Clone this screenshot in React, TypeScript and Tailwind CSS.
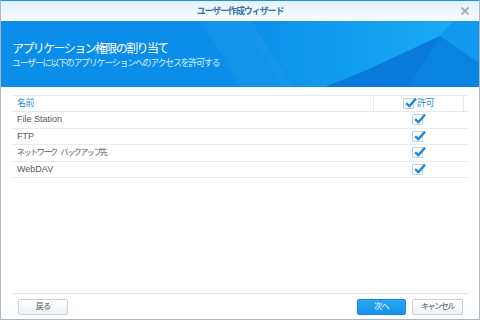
import React from "react";

const font = "[font-family:'Liberation_Sans','Noto_Sans_CJK_JP',sans-serif]";

const apps = [
  { name: "File Station", jp: false },
  { name: "FTP", jp: false },
  { name: "ネットワーク バックアップ先", jp: true },
  { name: "WebDAV", jp: false },
];

function Check() {
  return (
    <span className="relative inline-block w-[11px] h-[11px] border border-[#c5d0da] bg-white rounded-[1px]">
      <svg className="absolute left-[1px] top-[-2px]" width="12" height="12" viewBox="0 0 12 12">
        <path d="M1.2 6.2 L4.4 9.2 L11 1.6" fill="none" stroke="#168ae6" strokeWidth="2.4" strokeLinejoin="round" />
      </svg>
    </span>
  );
}

export default function App() {
  return (
    <div className={`w-[480px] h-[320px] flex flex-col bg-white border-x border-b border-[#a9b8c8] border-t border-t-[#1e8ee6] ${font}`}>
      {/* タイトルバー */}
      <div className="relative h-[20px] flex items-center justify-center bg-gradient-to-b from-[#e4f1fd] to-[#f9fcff]">
        <span className="text-[9px] font-bold tracking-[-1.1px] text-[#3a72ac] leading-none">ユーザー作成ウィザード</span>
        <svg className="absolute right-[10px] top-[6px]" width="8" height="8" viewBox="0 0 8 8">
          <path d="M0.5 0.5 L7.5 7.5 M7.5 0.5 L0.5 7.5" stroke="#9aa6b0" strokeWidth="1.6" />
        </svg>
      </div>

      {/* バナー */}
      <div className="relative h-[66px] bg-[#0a8eea] overflow-hidden">
        <svg className="absolute inset-0" width="478" height="66" viewBox="0 0 478 66">
          <defs>
            <linearGradient id="lb" x1="0" y1="0" x2="1" y2="0">
              <stop offset="0" stopColor="#20b4f6" stopOpacity="0" />
              <stop offset="1" stopColor="#20b4f6" stopOpacity="0.75" />
            </linearGradient>
          </defs>
          <polygon points="200,0 250,0 292,66 240,66" fill="#ffffff" opacity="0.04" />
          <polygon points="240,0 452,0 439,15 366,49 324,66 282,66" fill="url(#lb)" />
          <polygon points="324,66 366,49 439,15 408,66" fill="#0569cc" opacity="0.55" />
          <polygon points="439,15 478,42 478,66 408,66" fill="#0877d8" opacity="0.5" />
          <polygon points="452,0 478,0 478,42 439,15" fill="#18a6f2" opacity="0.45" />
        </svg>
        <div className="relative pl-[11px] pt-[21px] text-white">
          <div className="text-[12px] leading-[15px] tracking-[-1.6px]">アプリケーション権限の割り当て</div>
          <div className="text-[9px] leading-[12px] tracking-[-1.3px] text-[#d8eefc]">ユーザーに以下のアプリケーションへのアクセスを許可する</div>
        </div>
      </div>

      {/* テーブル */}
      <div className="flex-1 pl-[11px] pr-[10px] pt-[8px]">
        <div className="flex h-[17px] border-y border-[#e4e9ee] text-[9px] text-[#2a8de0]">
          <div className="flex-1 flex items-center pl-[5px] tracking-[-0.5px]">名前</div>
          <div className="w-[90px] flex items-center justify-center gap-[3px] border-l border-[#e4e9ee]">
            <Check />
            <span className="tracking-[-0.5px]">許可</span>
          </div>
          <div className="w-[6px] border-l border-[#e4e9ee]" />
        </div>
        {apps.map((a) => (
          <div key={a.name} className="flex h-[16.6px] border-b border-[#e8ecf0] text-[9px] text-[#5a5a5a]">
            <div className={`flex-1 flex items-center pl-[5px] ${a.jp ? "text-[8px] tracking-[-1.4px] [word-spacing:3px]" : ""}`}>{a.name}</div>
            <div className="w-[96px] flex items-center pl-[39px]">
              <Check />
            </div>
          </div>
        ))}
      </div>

      {/* フッター */}
      <div className="mx-[11px] mr-[10px] border-t border-[#e2e6ea] pt-[5px] pb-[4px] flex items-center">
        <button className="ml-[6px] w-[50px] h-[16px] text-[8px] tracking-[-0.8px] text-[#555] border border-[#c8d1da] rounded-[2px] bg-gradient-to-b from-white to-[#eef2f6]">
          戻る
        </button>
        <div className="flex-1" />
        <button className="w-[49px] h-[16px] text-[8px] tracking-[-0.8px] text-white border border-[#1688e0] rounded-[2px] bg-gradient-to-b from-[#2aa6f4] to-[#1593ea]">
          次へ
        </button>
        <button className="ml-[6px] mr-[6px] w-[51px] h-[16px] text-[8px] tracking-[-1.4px] text-[#555] border border-[#c8d1da] rounded-[2px] bg-gradient-to-b from-white to-[#eef2f6]">
          キャンセル
        </button>
      </div>
    </div>
  );
}
